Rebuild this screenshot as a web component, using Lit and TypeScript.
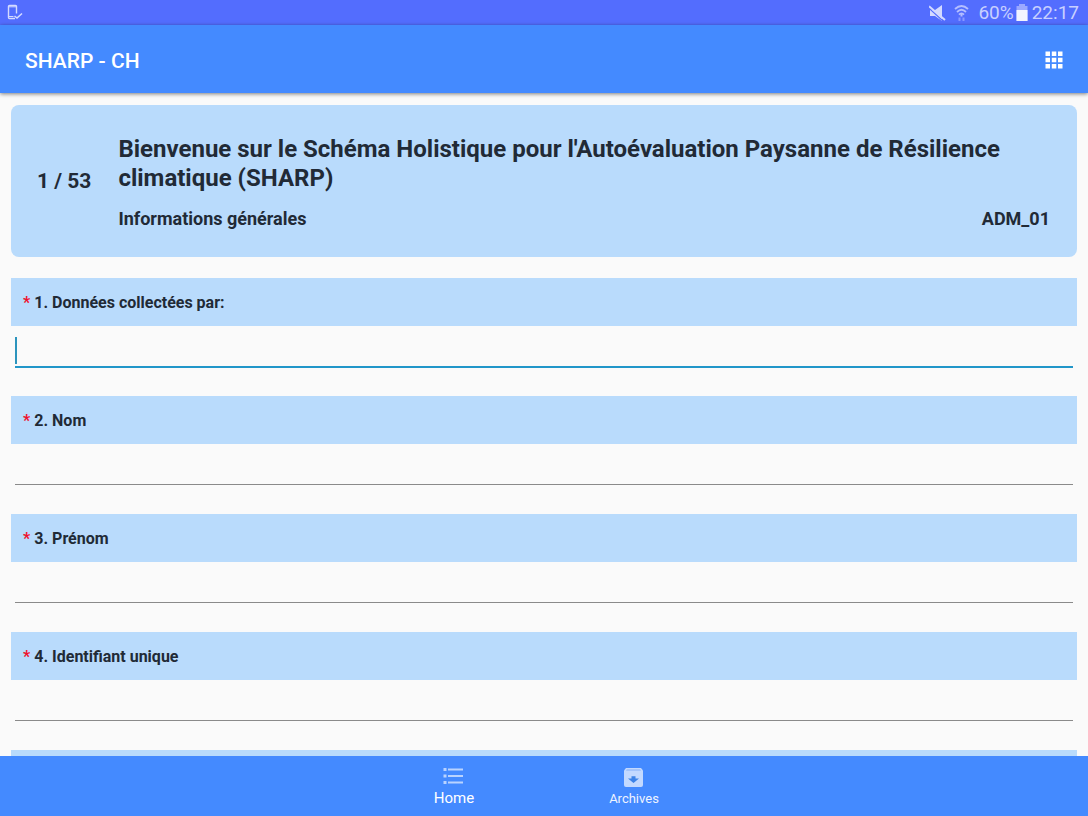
import { LitElement, html, css } from "lit";
import { customElement, property } from "lit/decorators.js";

const QUESTIONS = [
  "Données collectées par:",
  "Nom",
  "Prénom",
  "Identifiant unique",
];

@customElement("status-bar")
class StatusBar extends LitElement {
  static styles = css`
    :host {
      display: flex;
      flex: none;
      align-items: center;
      justify-content: space-between;
      height: 25px;
      padding: 0 9px 0 7px;
      background: #536dfe;
      color: #c8d0ff;
      font-size: 19px;
      line-height: 25px;
    }
    .right {
      display: flex;
      align-items: center;
    }
    .mute { margin-right: 8px; }
    .wifi { margin-right: 9px; }
    .battery { margin: 0 4px 0 2px; }
    svg { display: block; }
  `;

  render() {
    return html`
      <svg width="17" height="17" viewBox="0 0 17 17" fill="none" stroke="#d4daff">
        <path d="M9.500 9.500V2.500a1 1 0 0 0-1-1h-6a1 1 0 0 0-1 1v11a1 1 0 0 0 1 1h5.500" stroke-width="1.400" />
        <path d="M1.500 2.800h8M1.500 12.500h5" stroke-width="1" />
        <path d="M7.500 12l2.500 2 5-4.500" stroke-width="1.600" />
      </svg>
      <div class="right">
        <svg class="mute" width="17" height="18" viewBox="0 0 17 18">
          <path d="M1 6h5l7-5v16L6 12H1z" fill="#d4daff" />
          <path d="M0 4.300L14 17" stroke="#536dfe" stroke-width="1.200" />
          <path d="M0 2.300L16 16" stroke="#d4daff" stroke-width="2" />
        </svg>
        <svg class="wifi" width="15" height="18" viewBox="0 0 15 18" fill="none" stroke="#b4beff" stroke-width="1.800">
          <path d="M1 5Q7.500-1 14 5M3 8Q7.500 3.500 12 8M5 10.700Q7.500 8 10 10.700" />
          <path d="M7.500 9.500v3" stroke-width="2" />
          <path d="M5.500 13.500v3.500M9.500 13.500v3.500" stroke="#8a99ff" stroke-width="2" />
        </svg>
        <span>60%</span>
        <svg class="battery" width="12" height="18" viewBox="0 0 12 18">
          <path d="M3 0h6v2H11.500v15H.5V2H3z" fill="#9ba8ff" />
          <path d="M.5 6h11V17H.5z" fill="#f2f4ff" />
        </svg>
        <span>22:17</span>
      </div>
    `;
  }
}

@customElement("question-field")
class QuestionField extends LitElement {
  @property({ type: Number }) number = 1;
  @property() label = "";
  @property({ type: Boolean }) active = false;

  static styles = css`
    :host {
      display: block;
      flex: none;
    }
    .label {
      display: block;
      padding: 13px 12px 11px;
      background: #b9dbfc;
      color: #212a36;
      font-size: 16px;
      font-weight: 700;
      line-height: 24px;
    }
    .star { color: #f0102c; }
    .box {
      position: relative;
      height: 42px;
      margin: 0 4px;
    }
    input {
      display: block;
      box-sizing: border-box;
      width: 100%;
      height: 41px;
      margin: 0;
      padding: 0 4px;
      border: 0;
      border-bottom: 1px solid #8a8a8a;
      border-radius: 0;
      outline: none;
      background: transparent;
      color: #212a36;
      font: 18px Roboto, sans-serif;
    }
    .active input {
      height: 42px;
      border-bottom: 2px solid #2196c9;
      caret-color: transparent;
    }
    .active::before {
      content: "";
      position: absolute;
      left: 0;
      top: 11px;
      width: 2px;
      height: 27px;
      background: #2c94bd;
    }
  `;

  render() {
    return html`
      <label class="label" for="answer"><span class="star">*</span> ${this.number}. ${this.label}</label>
      <div class="box ${this.active ? "active" : ""}">
        <input id="answer" type="text" required />
      </div>
    `;
  }
}

@customElement("app-root")
class AppRoot extends LitElement {
  static styles = css`
    :host {
      display: flex;
      flex-direction: column;
      height: 100vh;
      background: #fafafa;
      color: #212a36;
      font-family: Roboto, sans-serif;
    }
    svg { display: block; }
    .toolbar {
      display: flex;
      flex: none;
      align-items: center;
      justify-content: space-between;
      z-index: 1;
      height: 68px;
      padding: 0 25px;
      background: #448aff;
      box-shadow: 0 1px 4px rgba(0, 0, 0, 0.5);
      color: #fff;
    }
    h1 {
      margin: 0;
      padding-top: 4px;
      font-size: 21px;
      font-weight: 500;
      line-height: 28px;
    }
    button {
      padding: 2px 0 0;
      border: 0;
      background: none;
      cursor: pointer;
    }
    main {
      display: flex;
      flex: 1;
      flex-direction: column;
      min-height: 0;
      padding: 12px 11px 0;
      overflow-y: auto;
      scrollbar-width: none;
    }
    .card {
      display: flex;
      flex: none;
      align-items: center;
      gap: 27px;
      margin-bottom: 21px;
      padding: 26px 27px 26px 26px;
      border-radius: 8px;
      background: #b9dbfc;
      font-weight: 700;
    }
    .count {
      font-size: 21px;
      line-height: 24px;
      white-space: nowrap;
    }
    .intro {
      flex: 1;
      padding-top: 4px;
    }
    h2 {
      margin: 0 0 14px;
      font-size: 24px;
      line-height: 29px;
    }
    .meta {
      display: flex;
      justify-content: space-between;
      font-size: 18px;
      line-height: 24px;
    }
    form {
      display: flex;
      flex-direction: column;
      gap: 28px;
    }
    .upcoming {
      height: 48px;
      background: #b9dbfc;
    }
    nav {
      display: flex;
      flex: none;
      justify-content: center;
      height: 60px;
      background: #448aff;
    }
    .tab {
      display: flex;
      flex-direction: column;
      align-items: center;
      justify-content: flex-end;
      box-sizing: border-box;
      width: 180px;
      padding-bottom: 8px;
      color: #eef4ff;
      font-size: 13px;
      line-height: 18px;
      text-decoration: none;
    }
    .tab.current {
      padding-bottom: 9px;
      color: #fff;
      font-size: 15px;
    }
  `;

  render() {
    return html`
      <status-bar></status-bar>
      <header class="toolbar">
        <h1>SHARP - CH</h1>
        <button type="button" aria-label="Menu">
          <svg width="18" height="18" viewBox="0 0 18 18" fill="#fff">
            <path d="M.5 .5h4.500v4.500h-4.500zM6.800 .5h4.500v4.500h-4.500zM13 .5h4.500v4.500h-4.500zM.5 6.800h4.500v4.500h-4.500zM6.800 6.800h4.500v4.500h-4.500zM13 6.800h4.500v4.500h-4.500zM.5 13h4.500v4.500h-4.500zM6.800 13h4.500v4.500h-4.500zM13 13h4.500v4.500h-4.500z" />
          </svg>
        </button>
      </header>
      <main>
        <section class="card">
          <div class="count">1 / 53</div>
          <div class="intro">
            <h2>Bienvenue sur le Schéma Holistique pour l'Autoévaluation Paysanne de Résilience climatique (SHARP)</h2>
            <div class="meta"><span>Informations générales</span><span>ADM_01</span></div>
          </div>
        </section>
        <form>
          ${QUESTIONS.map(
            (label, i) => html`<question-field .number=${i + 1} .label=${label} .active=${i === 0}></question-field>`
          )}
          <div class="upcoming"></div>
        </form>
      </main>
      <nav>
        <a class="tab current" href="#home">
          <svg width="24" height="24" viewBox="0 0 24 24" fill="#b9d3ff">
            <path d="M1.500 3h3v3h-3zM1.500 9.500h3v3h-3zM1.500 16h3v3h-3zM6 3.500h15v2H6zM6 10h15v2H6zM6 16.500h15v2H6z" />
          </svg>
          Home
        </a>
        <a class="tab" href="#archives">
          <svg width="24" height="24" viewBox="0 0 24 24">
            <path d="M4 2h15L21 4.500V19a2 2 0 0 1-2 2h-15a2 2 0 0 1-2-2V4.500z" fill="#c3d9ff" />
            <path d="M4 4.500l.8-1h13.400l.8 1z" fill="#86b0f8" />
            <path d="M11.500 17l-5.500-4.500H9.500v-2.300h4v2.300h3.500z" fill="#3d83e8" />
          </svg>
          Archives
        </a>
      </nav>
    `;
  }
}
